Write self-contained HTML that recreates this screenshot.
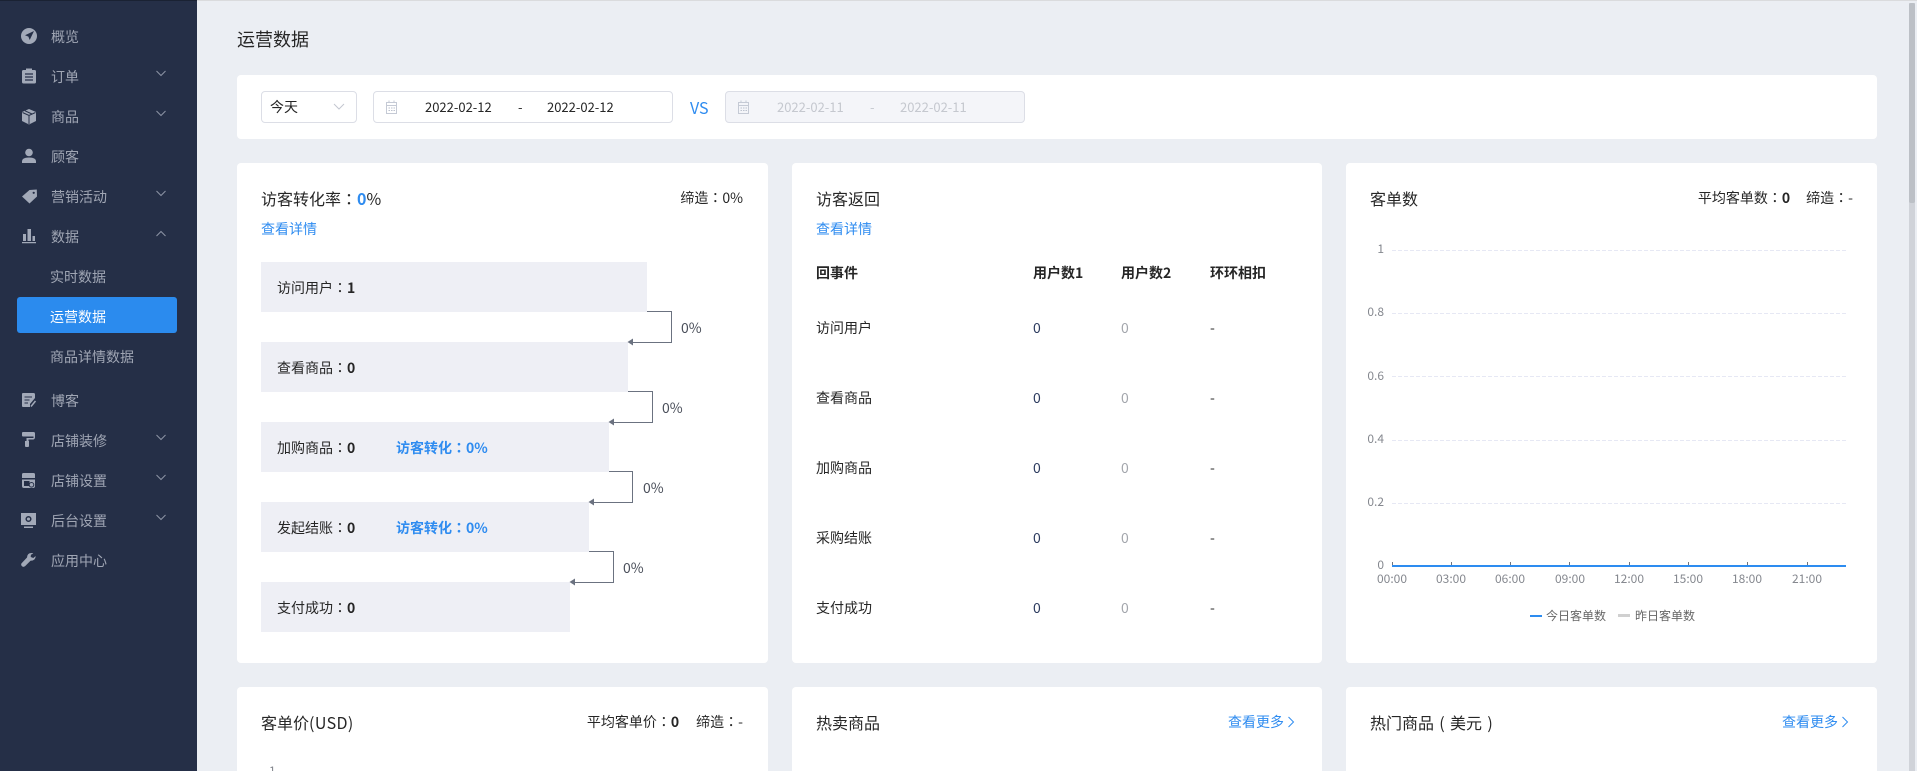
<!DOCTYPE html>
<html>
<head>
<meta charset="utf-8">
<title>运营数据</title>
<style>
*{box-sizing:border-box}
html,body{margin:0;padding:0;width:1917px;height:771px;overflow:hidden;background:#ebeef3}
body{position:relative;font-family:"Noto Sans CJK SC","Liberation Sans",sans-serif;font-size:14px;color:#262626}
.t{position:absolute;white-space:nowrap;line-height:20px;height:20px}
.r{text-align:right}
.c{font-family:"Noto Sans CJK TC","Noto Sans CJK SC",sans-serif}
.p{display:inline-block;width:16px;text-align:center}
.card{position:absolute;background:#fff;border-radius:4px}
#side{position:absolute;left:0;top:0;width:197px;height:771px;background:#252f47;border-top:1px solid #1a2233}
#hl{position:absolute;left:17px;top:297px;width:160px;height:36px;background:#2b8bee;border-radius:3px}
#topline{position:absolute;left:197px;top:0;width:1720px;height:1px;background:#dadbdd}
.blue{color:#2f8cf0}
.b{font-weight:700}
.bar{position:absolute;left:261px;height:50px;background:#eeeff5}
.h16{font-size:16px}
.ax{font-size:12px;color:#85888f}
.box{position:absolute;top:91px;height:32px;border:1px solid #dcdee6;border-radius:4px;background:#fff}
.m{color:#a0a6b4}
</style>
</head>
<body>
<div id="topline"></div>

<div id="side"></div>
<div id="hl"></div>
<svg style="position:absolute;left:0;top:0" width="197" height="771" viewBox="0 0 197 771" fill="#a2a9b8">
  <!-- overview -->
  <circle cx="29" cy="36" r="8"/>
  <path d="M34 31L25 35.3 28.4 36.6 29.7 40Z" fill="#252f47"/>
  <!-- order -->
  <path d="M23.5 70H26V68.5H32V70H34.5Q36 70 36 71.5V82Q36 83.5 34.5 83.5H23.500Q22 83.5 22 82V71.5Q22 70 23.5 70Z"/>
  <path d="M25 74H33M25 77H33M25 80H33" stroke="#252f47" stroke-width="1.2"/>
  <!-- box -->
  <path d="M29 109L36 112V121L29 124.500 22 121V112Z"/>
  <path d="M22.500 112.500L29 115.500 35.500 112.500M29 115.500V124M25 110.800L32 114" stroke="#252f47" stroke-width="1" fill="none"/>
  <!-- person -->
  <circle cx="29" cy="152.500" r="3.800"/>
  <path d="M22 163V161.500Q22 157.500 29 157.500T36 161.500V163Z"/>
  <!-- tag -->
  <path d="M29.500 190L36.800 189.500 37 196.500 29.500 203.500 22 196.500Z"/>
  <circle cx="33.700" cy="192.800" r="1.100" fill="#252f47"/>
  <!-- chart -->
  <path d="M23 234H26V241H23ZM27.500 229H31V241H27.500ZM32.500 236H35V241H32.500ZM22 242H36V243.200H22Z"/>
  <!-- blog -->
  <path d="M23 393H33.500Q35 393 35 394.500V398L30 404V407H23Q22 407 22 406V394Q22 393 23 393Z"/>
  <path d="M24.500 397H32M24.500 400H29.500M24.500 403H28" stroke="#252f47" stroke-width="1.100"/>
  <path d="M31 406.500L35.500 401" stroke="#a2a9b8" stroke-width="1.500"/>
  <!-- roller -->
  <path d="M23 432H33.500Q35 432 35 433.500V437Q35 439.500 33 439.500H28.500V441H26.500V438H33.500V436.500H23Q22 436.500 22 435.500V433Q22 432 23 432Z"/>
  <path d="M25 441H29V446Q29 447 28 447H26Q25 447 25 446Z"/>
  <!-- store -->
  <path d="M23.500 473H33.500Q35 473 35 474.500V478H22V474.500Q22 473 23.500 473Z"/>
  <path d="M22 479.500H35V486Q35 488 33 488H24Q22 488 22 486Z"/>
  <path d="M24 481H29.500V486H24Z" fill="#252f47"/>
  <circle cx="31.500" cy="484.800" r="2.300" fill="#a2a9b8" stroke="#252f47"/>
  <!-- monitor -->
  <path d="M21 513H36V525H21ZM24 526.500H33V528H24Z"/>
  <circle cx="28.500" cy="519" r="2.300" fill="none" stroke="#252f47" stroke-width="1.500"/>
  <!-- wrench -->
  <path d="M31.500 553Q27.300 553 27 557.500L21.600 563.200Q20.600 564.500 21.800 566T25 566.300L30.500 560.800Q35.500 560.800 35.700 556L33.300 558 30.700 557 30.900 554.800 33.300 553.500Q32.500 553 31.500 553Z"/>
  <!-- chevrons -->
  <g fill="none" stroke="#8d94a5" stroke-width="1">
    <path d="M156.500 71L161 75.500 165.500 71M156.500 111L161 115.500 165.500 111M156.500 191L161 195.500 165.500 191M156.500 236L161 231.500 165.500 236M156.500 435L161 439.500 165.500 435M156.500 475L161 479.500 165.500 475M156.500 515L161 519.500 165.500 515"/>
  </g>
</svg>
<div class="t m" style="left:51px;top:27px">概览</div>
<div class="t m" style="left:51px;top:67px">订单</div>
<div class="t m" style="left:51px;top:107px">商品</div>
<div class="t m" style="left:51px;top:147px">顾客</div>
<div class="t m" style="left:51px;top:187px">营销活动</div>
<div class="t m" style="left:51px;top:227px">数据</div>
<div class="t m" style="left:50px;top:267px">实时数据</div>
<div class="t" style="left:50px;top:307px;color:#fff">运营数据</div>
<div class="t m" style="left:50px;top:347px">商品详情数据</div>
<div class="t m" style="left:51px;top:391px">博客</div>
<div class="t m" style="left:51px;top:431px">店铺装修</div>
<div class="t m" style="left:51px;top:471px">店铺设置</div>
<div class="t m" style="left:51px;top:511px">后台设置</div>
<div class="t m" style="left:51px;top:551px">应用中心</div>

<!-- title -->
<div class="t" style="left:237px;top:29px;font-size:18px">运营数据</div>

<!-- filter -->
<div class="card" style="left:237px;top:75px;width:1640px;height:64px"></div>
<div class="box" style="left:261px;width:96px"></div>
<div class="t" style="left:270px;top:97px">今天</div>
<svg style="position:absolute;left:333px;top:102px" width="12" height="10"><path d="M1 2L6 7 11 2" fill="none" stroke="#c3c7d0"/></svg>
<div class="box" style="left:373px;width:300px"></div>
<svg style="position:absolute;left:385px;top:100px" width="13" height="14" fill="none" stroke="#c5cad5"><path d="M1.500 2.500H11.500V13.500H1.500ZM1.500 5.500H11.500M4 .5V3M9 .5V3"/><path d="M3.500 8H5M6 8H7.500M8.500 8H10M3.500 10.500H5M6 10.500H7.500M8.500 10.500H10" stroke="#bcc2ce"/></svg>
<div class="t" style="left:425px;top:97px;font-size:13px">2022-02-12</div>
<div class="t" style="left:518px;top:97px;font-size:13px">-</div>
<div class="t" style="left:547px;top:97px;font-size:13px">2022-02-12</div>
<div class="t blue" style="left:690px;top:97px;font-size:16px">VS</div>
<div class="box" style="left:725px;width:300px;background:#f4f5f9"></div>
<svg style="position:absolute;left:737px;top:100px" width="13" height="14" fill="none" stroke="#c5cad5"><path d="M1.500 2.500H11.500V13.500H1.500ZM1.500 5.500H11.500M4 .5V3M9 .5V3"/><path d="M3.500 8H5M6 8H7.500M8.500 8H10M3.500 10.500H5M6 10.500H7.500M8.500 10.500H10" stroke="#bcc2ce"/></svg>
<div class="t" style="left:777px;top:97px;font-size:13px;color:#c5c8cf">2022-02-11</div>
<div class="t" style="left:870px;top:97px;font-size:13px;color:#c5c8cf">-</div>
<div class="t" style="left:900px;top:97px;font-size:13px;color:#c5c8cf">2022-02-11</div>

<!-- card row 1 -->
<div class="card" style="left:237px;top:163px;width:531px;height:500px"></div>
<div class="card" style="left:792px;top:163px;width:530px;height:500px"></div>
<div class="card" style="left:1346px;top:163px;width:531px;height:500px"></div>

<!-- card 1 -->
<div class="t h16" style="left:261px;top:188px">访客转化率<span class="c" lang="zh-TW">：</span><span class="blue b">0</span>%</div>
<div class="t" style="right:1174px;top:188px">缔造<span class="c" lang="zh-TW">：</span>0%</div>
<div class="t blue" style="left:261px;top:219px">查看详情</div>

<div class="bar" style="top:262px;width:386px"></div>
<div class="bar" style="top:342px;width:367px"></div>
<div class="bar" style="top:422px;width:348px"></div>
<div class="bar" style="top:502px;width:328px"></div>
<div class="bar" style="top:582px;width:309px"></div>

<div class="t" style="left:277px;top:278px">访问用户<span class="c" lang="zh-TW">：</span><span class="b">1</span></div>
<div class="t" style="left:277px;top:358px">查看商品<span class="c" lang="zh-TW">：</span><span class="b">0</span></div>
<div class="t" style="left:277px;top:438px">加购商品<span class="c" lang="zh-TW">：</span><span class="b">0</span></div>
<div class="t blue b" style="left:396px;top:438px">访客转化<span class="c" lang="zh-TW">：</span>0%</div>
<div class="t" style="left:277px;top:518px">发起结账<span class="c" lang="zh-TW">：</span><span class="b">0</span></div>
<div class="t blue b" style="left:396px;top:518px">访客转化<span class="c" lang="zh-TW">：</span>0%</div>
<div class="t" style="left:277px;top:598px">支付成功<span class="c" lang="zh-TW">：</span><span class="b">0</span></div>

<svg style="position:absolute;left:0;top:0" width="800" height="680">
  <g fill="none" stroke="#6b7280" stroke-width="1">
    <path d="M647 311.500H671.500V342.500H632"/>
    <path d="M628 391.500H652.500V422.500H613"/>
    <path d="M609 471.500H632.500V502.500H593"/>
    <path d="M589 551.500H613.500V582.500H574"/>
  </g>
  <g fill="#6b7280">
    <path d="M627.500 342L633 338.500V345.500Z"/>
    <path d="M608.500 422L614 418.500V425.500Z"/>
    <path d="M588.500 502L594 498.500V505.500Z"/>
    <path d="M569.500 582L575 578.500V585.500Z"/>
  </g>
</svg>
<div class="t" style="left:681px;top:318px;color:#4a4f5a">0%</div>
<div class="t" style="left:662px;top:398px;color:#4a4f5a">0%</div>
<div class="t" style="left:643px;top:478px;color:#4a4f5a">0%</div>
<div class="t" style="left:623px;top:558px;color:#4a4f5a">0%</div>

<!-- card 2 -->
<div class="t h16" style="left:816px;top:188px">访客返回</div>
<div class="t blue" style="left:816px;top:219px">查看详情</div>
<div class="t b" style="left:816px;top:263px">回事件</div>
<div class="t b" style="left:1033px;top:263px">用户数1</div>
<div class="t b" style="left:1121px;top:263px">用户数2</div>
<div class="t b" style="left:1210px;top:263px">环环相扣</div>

<div class="t" style="left:816px;top:318px">访问用户</div><div class="t" style="left:1033px;top:318px;color:#2b3a5e">0</div><div class="t" style="left:1121px;top:318px;color:#a3a6ac">0</div><div class="t" style="left:1210px;top:318px">-</div>
<div class="t" style="left:816px;top:388px">查看商品</div><div class="t" style="left:1033px;top:388px;color:#2b3a5e">0</div><div class="t" style="left:1121px;top:388px;color:#a3a6ac">0</div><div class="t" style="left:1210px;top:388px">-</div>
<div class="t" style="left:816px;top:458px">加购商品</div><div class="t" style="left:1033px;top:458px;color:#2b3a5e">0</div><div class="t" style="left:1121px;top:458px;color:#a3a6ac">0</div><div class="t" style="left:1210px;top:458px">-</div>
<div class="t" style="left:816px;top:528px">采购结账</div><div class="t" style="left:1033px;top:528px;color:#2b3a5e">0</div><div class="t" style="left:1121px;top:528px;color:#a3a6ac">0</div><div class="t" style="left:1210px;top:528px">-</div>
<div class="t" style="left:816px;top:598px">支付成功</div><div class="t" style="left:1033px;top:598px;color:#2b3a5e">0</div><div class="t" style="left:1121px;top:598px;color:#a3a6ac">0</div><div class="t" style="left:1210px;top:598px">-</div>

<!-- card 3 -->
<div class="t h16" style="left:1370px;top:188px">客单数</div>
<div class="t" style="right:64px;top:188px">平均客单数<span class="c" lang="zh-TW">：</span><span class="b">0</span><span style="margin-left:16px">缔造<span class="c" lang="zh-TW">：</span>-</span></div>

<svg style="position:absolute;left:1346px;top:240px" width="531" height="390">
  <g stroke="#e6e8f4" stroke-dasharray="4 2">
    <path d="M46 10.500H501M46 73.500H501M46 136.500H501M46 200.500H501M46 263.500H501"/>
  </g>
  <g stroke="#70757d">
    <path d="M46.500 322V326M105.500 322V326M164.500 322V326M223.500 322V326M283.500 322V326M342.500 322V326M401.500 322V326M461.500 322V326"/>
  </g>
  <rect x="46" y="325" width="454" height="2" fill="#2d8cf0"/>
  <rect x="184" y="375" width="12" height="2" fill="#2d8cf0"/>
  <rect x="272" y="374" width="12" height="3" fill="#d0d0d0"/>
</svg>
<div class="t ax r" style="left:1354px;width:30px;top:239px">1</div>
<div class="t ax r" style="left:1354px;width:30px;top:302px">0.8</div>
<div class="t ax r" style="left:1354px;width:30px;top:366px">0.6</div>
<div class="t ax r" style="left:1354px;width:30px;top:429px">0.4</div>
<div class="t ax r" style="left:1354px;width:30px;top:492px">0.2</div>
<div class="t ax r" style="left:1354px;width:30px;top:555px">0</div>
<div class="t ax" style="left:1377px;top:569px">00:00</div>
<div class="t ax" style="left:1436px;top:569px">03:00</div>
<div class="t ax" style="left:1495px;top:569px">06:00</div>
<div class="t ax" style="left:1555px;top:569px">09:00</div>
<div class="t ax" style="left:1614px;top:569px">12:00</div>
<div class="t ax" style="left:1673px;top:569px">15:00</div>
<div class="t ax" style="left:1732px;top:569px">18:00</div>
<div class="t ax" style="left:1792px;top:569px">21:00</div>
<div class="t" style="left:1546px;top:606px;font-size:12px;color:#666">今日客单数</div>
<div class="t" style="left:1635px;top:606px;font-size:12px;color:#666">昨日客单数</div>

<!-- row 2 -->
<div class="card" style="left:237px;top:687px;width:531px;height:100px"></div>
<div class="card" style="left:792px;top:687px;width:530px;height:100px"></div>
<div class="card" style="left:1346px;top:687px;width:531px;height:100px"></div>
<div class="t h16" style="left:261px;top:712px">客单价<span style="letter-spacing:.4px">(USD)</span></div>
<div class="t" style="right:1174px;top:712px">平均客单价<span class="c" lang="zh-TW">：</span><span class="b">0</span><span style="margin-left:17px">缔造<span class="c" lang="zh-TW">：</span>-</span></div>
<div class="t ax" style="left:269px;top:761px">1</div>
<div class="t h16" style="left:816px;top:712px">热卖商品</div>
<div class="t blue" style="left:1228px;top:712px">查看更多</div>
<svg style="position:absolute;left:1287px;top:716px" width="8" height="12"><path d="M1.500 1L6.500 6 1.500 11" fill="none" stroke="#2f8cf0"/></svg>
<div class="t h16" style="left:1370px;top:712px">热门商品<span class="p">(</span>美元<span class="p">)</span></div>
<div class="t blue" style="left:1782px;top:712px">查看更多</div>
<svg style="position:absolute;left:1841px;top:716px" width="8" height="12"><path d="M1.500 1L6.500 6 1.500 11" fill="none" stroke="#2f8cf0"/></svg>

<!-- scrollbar -->
<div style="position:absolute;left:1909px;top:3px;width:6px;height:768px;background:#d0d3d9"></div>
<div style="position:absolute;left:1909px;top:3px;width:6px;height:200px;background:#bcc0c6;border-radius:2px"></div>
</body>
</html>
